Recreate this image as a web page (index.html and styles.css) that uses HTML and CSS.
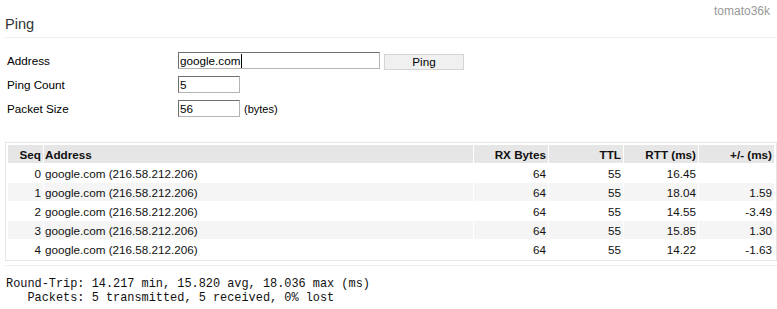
FILE: index.html
```html
<!DOCTYPE html>
<html>
<head>
<meta charset="utf-8">
<title>Ping</title>
<link rel="stylesheet" href="styles.css">
</head>
<body>
<div class="page">
  <header class="top">
    <div class="ver">tomato36k</div>
    <h1 class="title">Ping</h1>
  </header>
  <div class="form">
    <div class="row">
      <span class="lbl">Address</span>
      <div class="field field-wide" role="textbox">google.com<span class="caret"></span></div>
      <button class="btn" type="button">Ping</button>
    </div>
    <div class="row">
      <span class="lbl">Ping Count</span>
      <div class="field field-short" role="textbox">5</div>
    </div>
    <div class="row">
      <span class="lbl">Packet Size</span>
      <div class="field field-short" role="textbox">56</div>
      <span class="unit">(bytes)</span>
    </div>
  </div>
  <div class="results">
    <table class="grid">
      <colgroup>
        <col class="c-seq"><col class="c-addr"><col class="c-num"><col class="c-num"><col class="c-num"><col class="c-last">
      </colgroup>
      <thead>
        <tr><th class="r">Seq</th><th class="l">Address</th><th class="r">RX Bytes</th><th class="r">TTL</th><th class="r">RTT (ms)</th><th class="r">+/- (ms)</th></tr>
      </thead>
      <tbody>
        <tr><td class="r">0</td><td class="l">google.com (216.58.212.206)</td><td class="r">64</td><td class="r">55</td><td class="r">16.45</td><td class="r"></td></tr>
        <tr class="alt"><td class="r">1</td><td class="l">google.com (216.58.212.206)</td><td class="r">64</td><td class="r">55</td><td class="r">18.04</td><td class="r">1.59</td></tr>
        <tr><td class="r">2</td><td class="l">google.com (216.58.212.206)</td><td class="r">64</td><td class="r">55</td><td class="r">14.55</td><td class="r">-3.49</td></tr>
        <tr class="alt"><td class="r">3</td><td class="l">google.com (216.58.212.206)</td><td class="r">64</td><td class="r">55</td><td class="r">15.85</td><td class="r">1.30</td></tr>
        <tr><td class="r">4</td><td class="l">google.com (216.58.212.206)</td><td class="r">64</td><td class="r">55</td><td class="r">14.22</td><td class="r">-1.63</td></tr>
      </tbody>
    </table>
  </div>
  <div class="sep"></div>
  <pre class="stats">Round-Trip: 14.217 min, 15.820 avg, 18.036 max (ms)
   Packets: 5 transmitted, 5 received, 0% lost</pre>
</div>
</body>
</html>
```
FILE: styles.css
```css
* { box-sizing: border-box; }
html, body { margin: 0; padding: 0; background: #fff; }
body {
  font-family: "Liberation Sans", Arial, sans-serif;
  font-size: 11.7px;
  color: #000;
}
.page { width: 777px; }
.top { display: flex; flex-direction: column; }
.ver {
  font-size: 12px;
  line-height: 10px;
  height: 16px;
  padding: 6px 7px 0 0;
  text-align: right;
  color: #999;
}
.title {
  margin: 0 0 0 5px;
  padding: 0 0 4px 0;
  font-size: 14.6px;
  line-height: 17px;
  font-weight: normal;
  color: #333;
  border-bottom: 1px solid #f0f0f0;
}
.form {
  margin-top: 14px;
  padding-left: 7px;
  display: flex;
  flex-direction: column;
  gap: 7px;
}
.row {
  display: flex;
  align-items: center;
  height: 17px;
}
.lbl { width: 171px; flex: none; }
.field {
  height: 17px;
  line-height: 15px;
  padding: 0 1px;
  font-size: 11.7px;
  border: 1px solid;
  border-color: #6f6f6f #b4b4b4 #b4b4b4 #6f6f6f;
  background: #fff;
  display: flex;
  align-items: center;
  white-space: nowrap;
}
.field-wide { width: 202px; }
.field-short { width: 62px; }
.caret {
  display: inline-block;
  width: 1px;
  height: 14px;
  background: #000;
  margin-left: 1px;
}
.btn {
  margin-left: 4px;
  margin-top: 3px;
  width: 80px;
  height: 16px;
  padding: 0;
  font-family: "Liberation Sans", Arial, sans-serif;
  font-size: 11.7px;
  line-height: 14px;
  color: #000;
  background: #f0f0f0;
  border: 1px solid #d4d4d4;
  border-radius: 0;
}
.unit { margin-left: 4px; font-size: 11px; }
.results {
  margin: 25px 0 0 5px;
  border: 1px solid #e6e6e6;
  padding: 1px;
}
.grid {
  width: 100%;
  table-layout: fixed;
  border-collapse: separate;
  border-spacing: 1px;
  font-size: 11.7px;
}
.c-seq { width: 35px; }
.c-num { width: 74px; }
.c-last { width: 75px; }
.grid th, .grid td {
  padding: 0 2px;
  white-space: nowrap;
  overflow: hidden;
}
.grid th {
  height: 18px;
  background: #e6e6e6;
  font-weight: bold;
  color: #111;
}
.grid td { height: 18px; color: #111; }
.grid tr.alt td { background: #f5f5f5; }
.grid .r { text-align: right; }
.grid .l { text-align: left; padding-left: 1px; }
.sep {
  margin: 4px 0 0 5px;
  border-top: 1px solid #eee;
}
.stats {
  margin: 11px 0 0 6px;
  font-family: "Liberation Mono", "Courier New", monospace;
  font-size: 11.9px;
  line-height: 14px;
  color: #111;
}
```
